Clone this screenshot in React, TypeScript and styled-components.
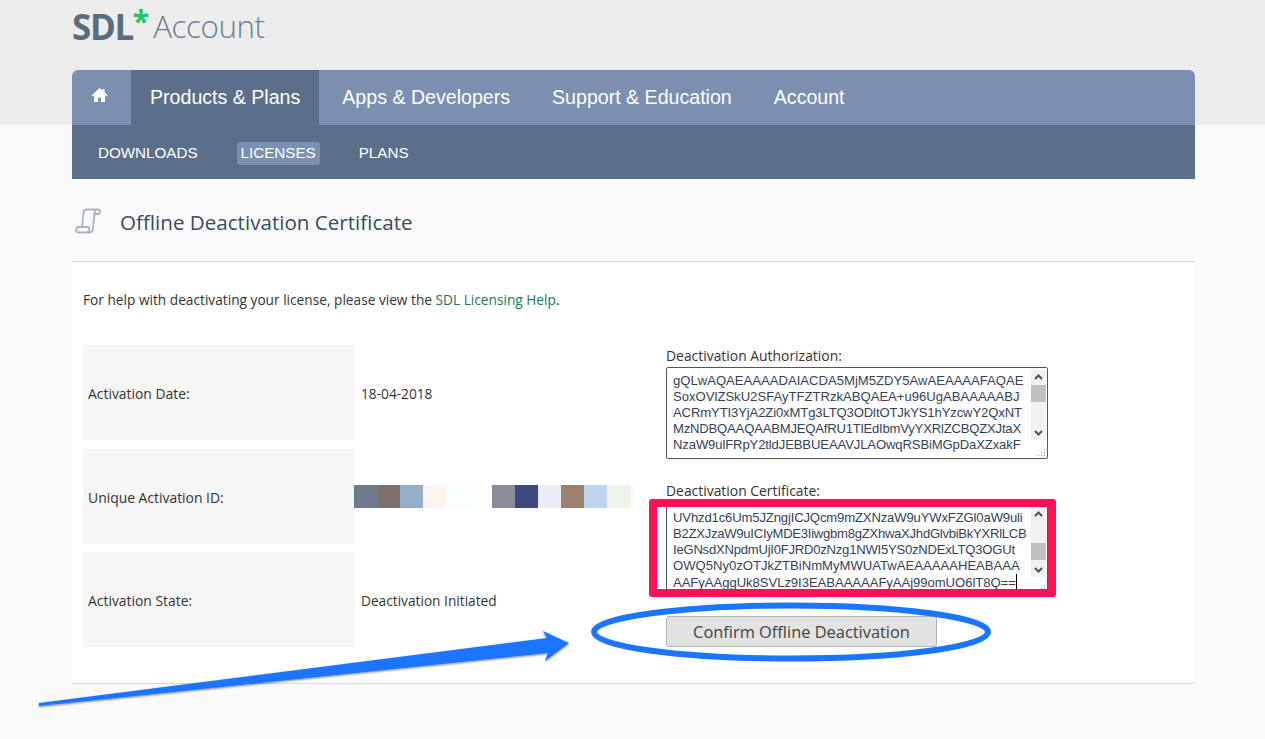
import React from "react";
import styled, { createGlobalStyle } from "styled-components";

const Global = createGlobalStyle`
  html, body { margin: 0; padding: 0; background: #fafafa; }
  body { font-family: "Open Sans", "Liberation Sans", sans-serif; overflow: hidden; }
  #root { height: 739px; overflow: hidden; }
`;

const Page = styled.div`
  position: relative;
  width: 1265px;
  height: 739px;
  overflow: hidden;
  background: linear-gradient(#ececec 0, #ececec 125px, #fafafa 125px);
`;
const Container = styled.div`
  width: 1123px;
  margin-left: 72px;
  display: flex;
  flex-direction: column;
`;
const Logo = styled.div`
  height: 70px;
  display: flex;
  align-items: flex-start;
  box-sizing: border-box;
  padding-top: 5px;
`;
const LogoMark = styled.span`
  font: 700 35px/44px "Open Sans", sans-serif;
  letter-spacing: -1.4px;
  color: #5a6d80;
`;
const LogoStar = styled.span`
  font: 700 30px/32px "Open Sans", sans-serif;
  color: #22c55e;
  margin: 0 4px 0 0;
  height: 30px;
`;
const LogoWord = styled.span`
  font: 300 31.3px/43px "Open Sans", sans-serif;
  color: #6b7f93;
  letter-spacing: -0.4px;
`;
const MainNav = styled.nav`
  height: 55px;
  display: flex;
  background: #7b8fb0;
  border-radius: 6px 6px 0 0;
  overflow: hidden;
`;
const HomeTab = styled.div`
  width: 59px;
  display: flex;
  justify-content: center;
  padding: 17px 5px 0 0;
  box-sizing: border-box;
`;
const Tab = styled.div<{ $active?: boolean }>`
  padding: 0 ${(p) => (p.$active ? "19px" : "21px")};
  background: ${(p) => (p.$active ? "#5c6f8a" : "transparent")};
  color: #fff;
  font: 19.6px/55px "Liberation Sans", sans-serif;
`;
const TabGap = styled.div`
  width: 2px;
`;
const SubNav = styled.nav`
  height: 54px;
  background: #5c6f8a;
  display: flex;
  align-items: center;
  padding: 2px 0 0 22px;
  box-sizing: border-box;
  gap: 35px;
`;
const SubItem = styled.div<{ $active?: boolean }>`
  font: 15.2px/21px "Liberation Sans", sans-serif;
  color: #fff;
  padding: 0 4px 2px;
  border-radius: 3px;
  background: ${(p) => (p.$active ? "#7b8fb0" : "transparent")};
`;
const TitleRow = styled.div`
  height: 82px;
  display: flex;
  align-items: center;
  box-sizing: border-box;
  padding: 2px 0 0 3px;
  gap: 19px;
`;
const Title = styled.h1`
  margin: 0;
  font: 400 20.6px/28px "Open Sans", sans-serif;
  color: #3b4a61;
  padding-top: 1px;
`;
const Panel = styled.section`
  height: 423px;
  box-sizing: border-box;
  background: #fff;
  border-top: 1px solid #d9d9d9;
  border-bottom: 1px solid #d9d9d9;
  padding: 28px 11px 0;
`;
const Help = styled.p`
  margin: 0;
  font: 13.7px/20px "Open Sans", sans-serif;
  color: #333;
`;
const HelpLink = styled.a`
  color: #14795a;
`;
const Columns = styled.div`
  display: flex;
  margin-top: 35px;
`;
const InfoTable = styled.div`
  width: 583px;
  display: flex;
  flex-direction: column;
`;
const InfoRow = styled.div<{ $gap: number }>`
  height: 95px;
  margin-bottom: ${(p) => p.$gap}px;
  display: flex;
  align-items: center;
`;
const InfoLabel = styled.div`
  width: 272px;
  height: 100%;
  box-sizing: border-box;
  padding: 2px 0 0 5px;
  background: #f6f6f6;
  display: flex;
  align-items: center;
  font: 13.9px/20px "Open Sans", sans-serif;
  color: #333;
`;
const InfoValue = styled.div`
  padding: 2px 0 0 6px;
  font: 13.7px/20px "Open Sans", sans-serif;
  color: #333;
`;
const Swatches = styled.div`
  display: flex;
  margin-left: -1px;
  margin-top: -1px;
`;
const Swatch = styled.div<{ $c: string; $w?: number }>`
  width: ${(p) => p.$w ?? 23}px;
  height: 23px;
  background: ${(p) => p.$c};
`;
const RightCol = styled.div`
  width: 382px;
  display: flex;
  flex-direction: column;
`;
const FieldLabel = styled.label<{ $top: number; $height: number }>`
  display: block;
  font: 13.9px/20px "Open Sans", sans-serif;
  color: #333;
  margin-top: ${(p) => p.$top}px;
  height: ${(p) => p.$height}px;
`;
const FieldBox = styled.div`
  position: relative;
  margin-top: 10px;
  height: 92px;
  box-sizing: border-box;
  border: 1px solid #555;
  border-radius: 2px;
  background: #fff;
  overflow: hidden;
`;
const FieldText = styled.div<{ $top: number }>`
  padding: ${(p) => p.$top}px 0 0 6px;
  font: 13.1px/16px "Liberation Sans", sans-serif;
  color: #353f58;
  white-space: pre;
`;
const FieldLine = styled.div<{ $spacing: number }>`
  letter-spacing: ${(p) => p.$spacing}px;
`;
const Caret = styled.span`
  display: inline-block;
  width: 1px;
  height: 15px;
  background: #000;
  vertical-align: -2px;
`;
const Scrollbar = styled.div<{ $top: number }>`
  position: absolute;
  right: 1px;
  top: ${(p) => p.$top}px;
  width: 15px;
  height: 70px;
  background: #f1f1f1;
`;
const Thumb = styled.div<{ $top: number }>`
  position: absolute;
  left: 0;
  right: 0;
  top: ${(p) => p.$top}px;
  height: 17px;
  background: #c1c1c1;
`;
const Arrow = styled.svg<{ $down?: boolean }>`
  position: absolute;
  left: 3px;
  ${(p) => (p.$down ? "bottom: 4px;" : "top: 4px;")}
`;
const Grip = styled.svg`
  position: absolute;
  right: 1px;
  bottom: 1px;
`;
const ConfirmButton = styled.button`
  margin-top: 21px;
  width: 271px;
  height: 31px;
  box-sizing: border-box;
  background: #e2e2e2;
  border: 1px solid #b5b5b5;
  border-radius: 3px;
  color: #444;
  font: 16.4px/20px "Open Sans", sans-serif;
  padding: 0;
`;
const Annotations = styled.svg`
  position: absolute;
  left: 0;
  top: 0;
  pointer-events: none;
`;
const Callout = styled.div`
  position: absolute;
  left: 649px;
  top: 499px;
  width: 407px;
  height: 98px;
  box-sizing: border-box;
  border: 8px solid #ff1158;
  border-radius: 3px;
`;

type Line = [string, number];

const Chevron = ({ down }: { down?: boolean }) => (
  <Arrow $down={down} width="9" height="6" viewBox="0 0 9 6">
    <path d={down ? "M1 1l3.5 3.5L8 1" : "M1 5l3.5-3.5L8 5"} fill="none" stroke="#505050" strokeWidth="2" />
  </Arrow>
);

const TextBox = ({ lines, thumb, top, barTop, caret }: { lines: Line[]; thumb: number; top: number; barTop: number; caret?: boolean }) => (
  <FieldBox>
    <FieldText $top={top}>
      {lines.map(([text, spacing], i) => (
        <FieldLine key={i} $spacing={spacing}>
          {text}
          {caret && i === lines.length - 1 ? <Caret /> : null}
        </FieldLine>
      ))}
    </FieldText>
    <Scrollbar $top={barTop}>
      <Chevron />
      <Thumb $top={thumb} />
      <Chevron down />
    </Scrollbar>
    <Grip width="10" height="10" viewBox="0 0 10 10">
      <path d="M8 2h1v1H8zM5 5h1v1H5zM8 5h1v1H8zM2 8h1v1H2zM5 8h1v1H5zM8 8h1v1H8z" fill="#999" />
    </Grip>
  </FieldBox>
);

const swatches: [string, number?][] = [
  ["#6f7a8b"], ["#7c706d"], ["#95aeca"], ["#fdf4ef"], ["#f7ffff"], ["#fefefe"],
  ["#8a8c9a"], ["#41487d"], ["#eaeef7"], ["#9c8070"], ["#bed3f0"], ["#edf5e8"], ["#f8fbfe", 4],
];

const auth: Line[] = [
  ["gQLwAQAEAAAADAIACDA5MjM5ZDY5AwAEAAAAFAQAE", 0],
  ["SoxOVlZSkU2SFAyTFZTRzkABQAEA+u96UgABAAAAABJ", 0],
  ["ACRmYTI3YjA2Zi0xMTg3LTQ3ODltOTJkYS1hYzcwY2QxNT", -0.13],
  ["MzNDBQAAQAABMJEQAfRU1TlEdIbmVyYXRlZCBQZXJtaX", -0.2],
  ["NzaW9ulFRpY2tldJEBBUEAAVJLAOwqRSBiMGpDaXZxakF", -0.13],
];
const cert: Line[] = [
  ["UVhzd1c6Um5JZngjICJQcm9mZXNzaW9uYWxFZGl0aW9uli", -0.15],
  ["B2ZXJzaW9uICIyMDE3Iiwgbm8gZXhwaXJhdGlvbiBkYXRlLCB", -0.27],
  ["IeGNsdXNpdmUjI0FJRD0zNzg1NWI5YS0zNDExLTQ3OGUt", -0.24],
  ["OWQ5Ny0zOTJkZTBiNmMyMWUATwAEAAAAAHEABAAA", 0],
  ["AAFyAAggUk8SVLz9I3EABAAAAAFyAAj99omUO6lT8Q==", -0.05],
];

export default function App() {
  return (
    <Page>
      <Global />
      <Container>
        <Logo>
          <LogoMark>SDL</LogoMark>
          <LogoStar>*</LogoStar>
          <LogoWord>Account</LogoWord>
        </Logo>
        <MainNav>
          <HomeTab>
            <svg width="17" height="16" viewBox="0 0 16 16">
              <path d="M8 1L0 8.4l1 1L2.5 8v7h4v-4.500h3V15h4V8l1.500 1.400 1-1L13 5V2h-2v1.200z" fill="#fff" />
            </svg>
          </HomeTab>
          <Tab $active>Products &amp; Plans</Tab>
          <TabGap />
          <Tab>Apps &amp; Developers</Tab>
          <Tab>Support &amp; Education</Tab>
          <Tab>Account</Tab>
        </MainNav>
        <SubNav>
          <SubItem>DOWNLOADS</SubItem>
          <SubItem $active>LICENSES</SubItem>
          <SubItem>PLANS</SubItem>
        </SubNav>
        <TitleRow>
          <svg width="26" height="26" viewBox="0 0 26 26" fill="none" stroke="#a9b3c0" strokeWidth="1.800" strokeLinejoin="round">
            <path d="M7 19L8.500 4.500C8.700 2.500 10 1.500 12 1.500h11c1.500 0 2.300 1 2 2.300-.3 1.400-1.200 2.200-2.500 2.200h-3.300L20 3.500c.2-1.200-.6-2-2-2M19.500 6L17.800 21.500c-.3 2-1.600 3-3.500 3H4c-2 0-3-.9-3-2.400 0-1.600 1-3.100 2.800-3.100h8.700c1.300 0 1.900.9 1.700 2.300-.2 1.500-1 2.700-2 3.200" />
          </svg>
          <Title>Offline Deactivation Certificate</Title>
        </TitleRow>
        <Panel>
          <Help>
            For help with deactivating your license, please view the <HelpLink>SDL Licensing Help</HelpLink>.
          </Help>
          <Columns>
            <InfoTable>
              <InfoRow $gap={9}>
                <InfoLabel>Activation Date:</InfoLabel>
                <InfoValue>18-04-2018</InfoValue>
              </InfoRow>
              <InfoRow $gap={8}>
                <InfoLabel>Unique Activation ID:</InfoLabel>
                <Swatches>
                  {swatches.map(([c, w], i) => (
                    <Swatch key={i} $c={c} $w={w} />
                  ))}
                </Swatches>
              </InfoRow>
              <InfoRow $gap={0}>
                <InfoLabel>Activation State:</InfoLabel>
                <InfoValue>Deactivation Initiated</InfoValue>
              </InfoRow>
            </InfoTable>
            <RightCol>
              <FieldLabel $top={1} $height={11}>Deactivation Authorization:</FieldLabel>
              <TextBox lines={auth} thumb={15} top={5} barTop={2} />
              <FieldLabel $top={22} $height={12}>Deactivation Certificate:</FieldLabel>
              <TextBox lines={cert} thumb={36} top={6} barTop={3} caret />
              <ConfirmButton>Confirm Offline Deactivation</ConfirmButton>
            </RightCol>
          </Columns>
        </Panel>
      </Container>
      <Callout />
      <Annotations width="1265" height="739" viewBox="0 0 1265 739">
        <defs>
          <filter id="shadow" x="-5%" y="-20%" width="110%" height="140%">
            <feDropShadow dx="0" dy="1" stdDeviation="0.8" floodColor="#000" floodOpacity="0.5" />
          </filter>
        </defs>
        <ellipse cx="791" cy="632" rx="197" ry="26.500" fill="none" stroke="#1a75ff" strokeWidth="6" />
        <path d="M39 703L39 706 L548 653 L545 661 L569 643 L543 631 L547 638 Z" fill="#1a75ff" filter="url(#shadow)" />
      </Annotations>
    </Page>
  );
}
